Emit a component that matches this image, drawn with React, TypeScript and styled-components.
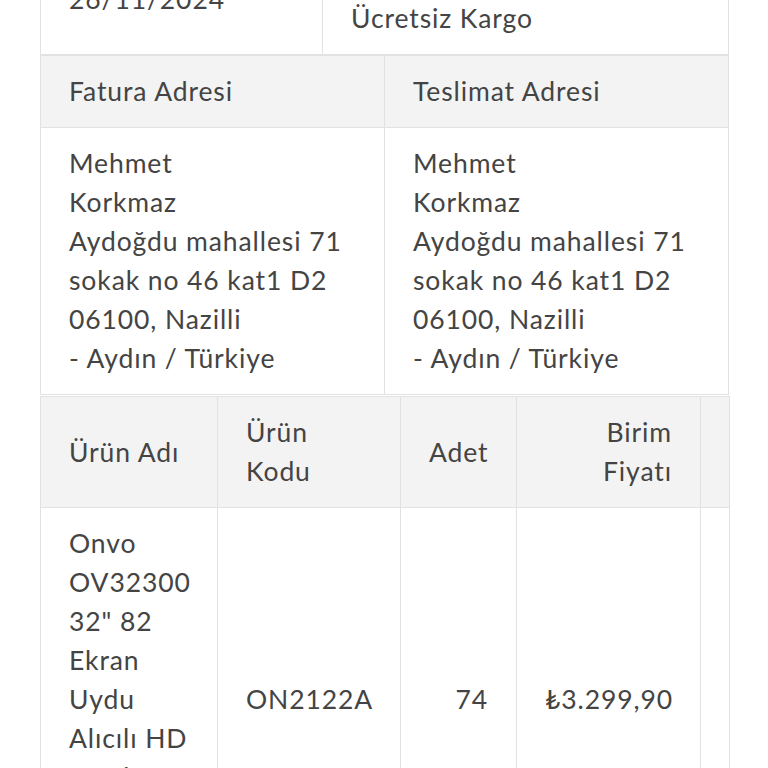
import React from "react";
import styled, { createGlobalStyle } from "styled-components";

const Global = createGlobalStyle`
  html, body { margin: 0; padding: 0; background: #ffffff; }
  body { font-family: "Lato", "Noto Sans", sans-serif; color: #444444; overflow: hidden; }
`;

const Page = styled.div`
  padding: 0 39px 0 40px;
  margin-top: -96px;
  display: flex;
  flex-direction: column;
`;

const Table = styled.table`
  width: 100%;
  border-collapse: collapse;
  table-layout: fixed;
  border: 1px solid #e2e2e2;
  font-size: 26.5px;
  letter-spacing: 0.9px;
  line-height: 39px;
`;

const Cell = styled.td<{ $align?: string; $head?: boolean; $valign?: string }>`
  border: 1px solid #e2e2e2;
  padding: 16px 28px;
  text-align: ${(p) => p.$align || "left"};
  vertical-align: ${(p) => p.$valign || "middle"};
  background: ${(p) => (p.$head ? "#f3f3f3" : "#ffffff")};
  font-weight: 400;
  color: #444444;
`;

const Scroller = styled.div`
  overflow: hidden;
  width: 100%;
  border-right: 1px solid #e2e2e2;
  margin-top: 1px;
`;

const WideTable = styled(Table)`
  width: 800px;
`;

export default function App() {
  return (
    <>
      <Global />
      <Page>
        <Table>
          <colgroup>
            <col style={{ width: 282 }} />
            <col />
          </colgroup>
          <tbody>
            <tr>
              <Cell>
                Sipariş Tarihi
                <br />
                26/11/2024
              </Cell>
              <Cell>
                Kargo Firması
                <br />
                Kargo Ücreti
                <br />
                Ücretsiz Kargo
              </Cell>
            </tr>
          </tbody>
        </Table>
        <Table>
          <tbody>
            <tr>
              <Cell $head>Fatura Adresi</Cell>
              <Cell $head>Teslimat Adresi</Cell>
            </tr>
            <tr>
              <Cell $valign="top">
                Mehmet
                <br />
                Korkmaz
                <br />
                Aydoğdu mahallesi 71 sokak no 46 kat1 D2 06100, Nazilli
                <br />- Aydın / Türkiye
              </Cell>
              <Cell $valign="top">
                Mehmet
                <br />
                Korkmaz
                <br />
                Aydoğdu mahallesi 71 sokak no 46 kat1 D2 06100, Nazilli
                <br />- Aydın / Türkiye
              </Cell>
            </tr>
          </tbody>
        </Table>
        <Scroller>
          <WideTable>
            <colgroup>
              <col style={{ width: 177 }} />
              <col style={{ width: 183 }} />
              <col style={{ width: 116 }} />
              <col style={{ width: 184 }} />
              <col style={{ width: 140 }} />
            </colgroup>
            <thead>
              <tr>
                <Cell as="th" $head>Ürün Adı</Cell>
                <Cell as="th" $head>Ürün Kodu</Cell>
                <Cell as="th" $head $align="right">Adet</Cell>
                <Cell as="th" $head $align="right">Birim Fiyatı</Cell>
                <Cell as="th" $head $align="right">Tutar</Cell>
              </tr>
            </thead>
            <tbody>
              <tr>
                <Cell>Onvo OV32300 32" 82 Ekran Uydu Alıcılı HD Ready Android TV</Cell>
                <Cell>ON2122A</Cell>
                <Cell $align="right">74</Cell>
                <Cell $align="right">₺3.299,90</Cell>
                <Cell $align="right">₺244.192,60</Cell>
              </tr>
            </tbody>
          </WideTable>
        </Scroller>
      </Page>
    </>
  );
}
